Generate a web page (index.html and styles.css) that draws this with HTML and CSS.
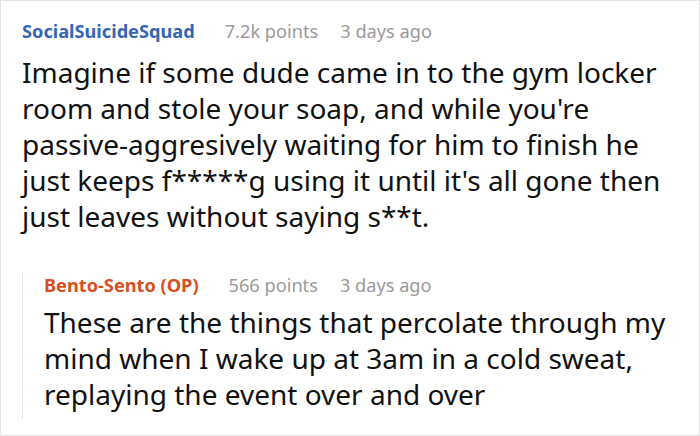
FILE: index.html
```html
<!DOCTYPE html>
<html>
<head>
<meta charset="utf-8">
<link rel="stylesheet" href="styles.css">
</head>
<body>
<div class="card">
  <div class="comment">
    <div class="meta">
      <span class="author">SocialSuicideSquad</span>
      <span class="info">7.2k points</span>
      <span class="info">3 days ago</span>
    </div>
    <p class="body">Imagine if some dude came in to the gym locker room and stole your soap, and while you're passive-aggresively waiting for him to finish he just keeps f*****g using it until it's all gone then just leaves without saying s**t.</p>
  </div>
  <div class="reply">
    <div class="meta">
      <span class="author op">Bento-Sento (OP)</span>
      <span class="info">566 points</span>
      <span class="info">3 days ago</span>
    </div>
    <p class="body">These are the things that percolate through my mind when I wake up at 3am in a cold sweat, replaying the event over and over</p>
  </div>
</div>
</body>
</html>
```
FILE: styles.css
```css
html, body {
  margin: 0;
  padding: 0;
  background: #fff;
}
.card {
  box-sizing: border-box;
  width: 700px;
  height: 436px;
  border: 1px solid #e3e3e3;
  padding: 19px 12px 0 21px;
  font-family: "Noto Sans", "Open Sans", sans-serif;
  color: #111;
  overflow: hidden;
}
.meta {
  display: flex;
  gap: 22px;
  font-size: 18.2px;
  line-height: 22px;
  white-space: nowrap;
}
.author {
  font-weight: 700;
  color: #3565b5;
  margin-right: 8px;
}
.author.op {
  color: #d5501d;
}
.info {
  color: #9a9a9a;
}
.body {
  margin: 12px 0 0;
  font-size: 28px;
  line-height: 36px;
}
.reply {
  margin-top: 49px;
  margin-right: -8px;
  border-left: 1px solid #e0e0e0;
  padding: 0 0 7px 21px;
}
.reply .meta {
  margin-top: -9px;
}
.reply .body {
  margin-top: 8px;
}
```
